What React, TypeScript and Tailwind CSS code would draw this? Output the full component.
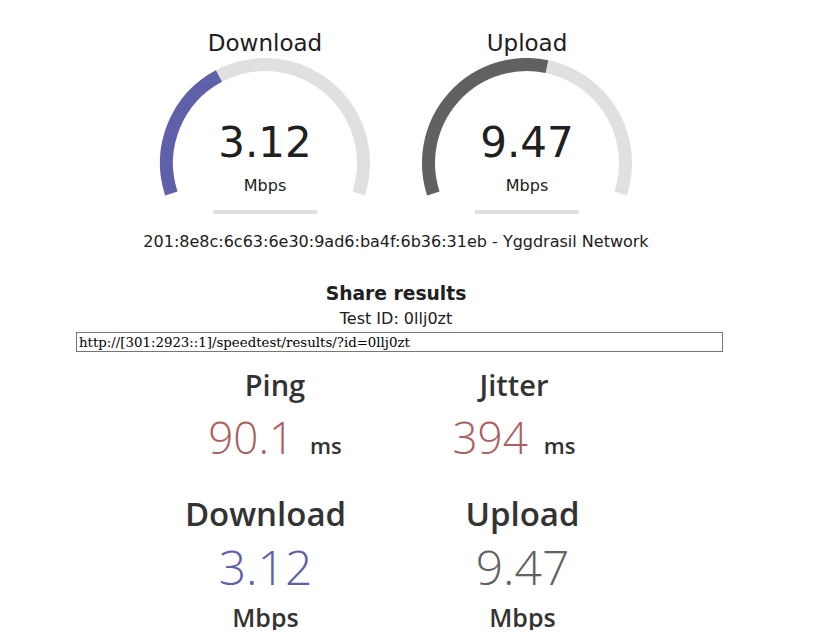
import React from 'react'

// same curve as the speedtest page uses to fill the meters
const mbpsToAmount = (s: number) => 1 - 1 / Math.pow(1.3, Math.sqrt(s))

const CX = 120
const CY = 105
const R = 98.5
const START = 162
const SPAN = 216

const pointAt = (deg: number) => {
  const a = (deg * Math.PI) / 180
  return [CX + R * Math.cos(a), CY + R * Math.sin(a)]
}

const arcPath = (from: number, to: number) => {
  const [x1, y1] = pointAt(from)
  const [x2, y2] = pointAt(to)
  const large = to - from > 180 ? 1 : 0
  return `M ${x1.toFixed(2)} ${y1.toFixed(2)} A ${R} ${R} 0 ${large} 1 ${x2.toFixed(2)} ${y2.toFixed(2)}`
}

interface GaugeProps {
  title: string
  value: string
  color: string
}

function Gauge({ title, value, color }: GaugeProps) {
  const amount = mbpsToAmount(parseFloat(value))
  return (
    <div className="w-[240px] flex flex-col items-center">
      <div className="text-[23px] leading-[30px] text-[#202020]">{title}</div>
      <div className="relative w-[240px] h-[160px] flex flex-col items-center">
        <svg className="absolute left-0 top-0" width="240" height="150" viewBox="0 0 240 150">
          <path d={arcPath(START, START + SPAN)} fill="none" stroke="#E0E0E0" strokeWidth="13" />
          <path d={arcPath(START, START + SPAN * amount)} fill="none" stroke={color} strokeWidth="13" />
        </svg>
        <div className="relative mt-[64px] text-[42px] leading-none text-[#202020]">{value}</div>
        <div className="relative mt-[12px] text-[16px] leading-[20px] text-[#202020]">Mbps</div>
        <div className="relative mt-[14px] w-[104px] h-[4px] bg-[#E0E0E0]" />
      </div>
    </div>
  )
}

export default function App() {
  const testId = '0llj0zt'
  return (
    <div className="w-[792px] bg-white font-['DejaVu_Sans',sans-serif] text-[#202020]">
      {/* Meters */}
      <div className="flex justify-center gap-[22px] pt-[28px]">
        <Gauge title="Download" value="3.12" color="#6060AA" />
        <Gauge title="Upload" value="9.47" color="#616161" />
      </div>

      <div className="mt-[14px] text-center text-[16px] leading-[20px]">
        201:8e8c:6c63:6e30:9ad6:ba4f:6b36:31eb - Yggdrasil Network
      </div>

      {/* Share */}
      <h3 className="mt-[30px] text-center text-[18.72px] leading-[24px] font-bold">Share results</h3>
      <div className="mt-[3px] text-center text-[16px] leading-[20px]">Test ID: {testId}</div>
      <input
        readOnly
        value={`http://[301:2923::1]/speedtest/results/?id=${testId}`}
        className="block mt-[3px] ml-[76px] w-[647px] h-[20px] border border-[#767676] px-[2px] text-[13.33px] leading-[18px] text-black font-['DejaVu_Serif',serif] outline-none"
      />

      {/* Result card */}
      <div className="font-['Open_Sans',sans-serif] text-[#333333]">
        <div className="flex justify-center mt-[18px] pr-[3px]">
          <div className="w-[239px] flex flex-col items-center">
            <div className="text-[29px] leading-none font-semibold">Ping</div>
            <div className="mt-[16px] flex items-baseline gap-[16px]">
              <span className="text-[44px] leading-none font-light text-[#AA6060]">90.1</span>
              <span className="text-[22px] leading-none font-semibold">ms</span>
            </div>
          </div>
          <div className="w-[239px] flex flex-col items-center">
            <div className="text-[29px] leading-none font-semibold">Jitter</div>
            <div className="mt-[16px] flex items-baseline gap-[16px]">
              <span className="text-[44px] leading-none font-light text-[#AA6060]">394</span>
              <span className="text-[22px] leading-none font-semibold">ms</span>
            </div>
          </div>
        </div>

        <div className="flex justify-center mt-[38px] pr-[4px]">
          <div className="w-[257px] flex flex-col items-center">
            <div className="text-[33px] leading-none font-semibold">Download</div>
            <div className="mt-[13px] text-[48px] leading-none font-light text-[#6060AA]">3.12</div>
            <div className="mt-[14px] text-[25px] leading-none font-semibold">Mbps</div>
          </div>
          <div className="w-[257px] flex flex-col items-center">
            <div className="text-[33px] leading-none font-semibold">Upload</div>
            <div className="mt-[13px] text-[48px] leading-none font-light text-[#616161]">9.47</div>
            <div className="mt-[14px] text-[25px] leading-none font-semibold">Mbps</div>
          </div>
        </div>
      </div>
    </div>
  )
}
